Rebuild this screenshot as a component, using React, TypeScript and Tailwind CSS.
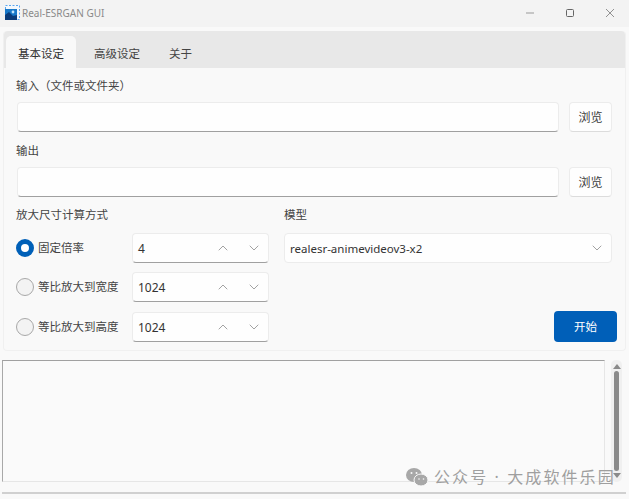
import { ChevronDown, ChevronUp } from "lucide-react";

const FONT = "font-['Noto_Sans','Noto_Sans_CJK_SC',sans-serif]";

function AppIcon() {
  return (
    <svg viewBox="0 0 15 15" width={15} height={15} className="shrink-0">
      <rect x="0" y="0" width="15" height="15" fill="#f3f8fd" />
      <rect x="0.5" y="0.5" width="14" height="14" fill="none" stroke="#5aa5ee" strokeDasharray="2 1.5" />
      <rect x="0" y="4" width="12" height="11" fill="#1878c8" />
      <path d="M0 15V10L4 7l4 4 4-1v5z" fill="#0b3b78" />
      <circle cx="8" cy="7" r="1.4" fill="#bfe3fb" />
    </svg>
  );
}

function TextInput() {
  return <div className="h-[30px] flex-1 rounded-[4px] border border-[#ececec] border-b-[#a0a0a0] bg-[#fefefe]" />;
}

function Browse() {
  return (
    <button className="h-[30px] w-[43px] shrink-0 rounded-[4px] border border-[#ececec] border-b-[#dcdcdc] bg-[#fefefe] pt-[1px] text-[12px] text-[#3c3c3c]">
      浏览
    </button>
  );
}

function Spin({ value }: { value: string }) {
  return (
    <div className="flex h-[30px] w-[137px] items-center rounded-[4px] border border-[#ececec] border-b-[#a0a0a0] bg-[#fefefe] pl-[5px] text-[12px] text-[#333]">
      <span className="flex-1 pt-[1px]">{value}</span>
      <ChevronUp size={16} strokeWidth={1.1} className="mr-[15px] text-[#808080]" />
      <ChevronDown size={16} strokeWidth={1.1} className="mr-[6px] text-[#808080]" />
    </div>
  );
}

function Radio({ label, checked }: { label: string; checked?: boolean }) {
  return (
    <div className="-ml-[1px] flex w-[116px] items-center gap-[4px] text-[11.5px] text-[#444]">
      {checked ? (
        <span className="h-[18px] w-[18px] shrink-0 rounded-full border-[5px] border-[#0060b8] bg-white" />
      ) : (
        <span className="h-[18px] w-[18px] shrink-0 rounded-full border border-[#a8a8a8] bg-[#f3f3f3]" />
      )}
      <span className="whitespace-nowrap">{label}</span>
    </div>
  );
}

export default function App() {
  return (
    <div className={`${FONT} flex h-[499px] w-[629px] flex-col overflow-hidden bg-[#f9f9f9]`}>
      <div className="flex h-[27px] shrink-0 items-center bg-[#f3f3f3] pb-[2px] pl-[5px] text-[10px] text-[#8a8a8a]">
        <AppIcon />
        <span className="ml-[2px] flex-1 pt-[1px]">Real-ESRGAN GUI</span>
        <svg viewBox="0 0 10 10" width={10} height={10} className="mr-[30px]">
          <path d="M1 5h8" stroke="#999" fill="none" />
        </svg>
        <svg viewBox="0 0 10 10" width={10} height={10} className="mr-[30px]">
          <rect x="1.5" y="1.5" width="7" height="7" rx="1" stroke="#666" fill="none" />
        </svg>
        <svg viewBox="0 0 10 10" width={10} height={10} className="mr-[14px]">
          <path d="M1 1l8 8M9 1l-8 8" stroke="#777" fill="none" strokeWidth="0.8" />
        </svg>
      </div>

      <div className="mx-[3px] mt-[4px] h-[320px] shrink-0 rounded-[4px] border-x border-b border-[#f0f0f0] bg-[#f9f9f9]">
        <div className="flex h-[37px] items-end rounded-t-[4px] bg-[#e8e8e8] pl-[2px] text-[11.5px] text-[#444]">
          <div className="flex h-[32px] w-[70px] items-center justify-center rounded-t-[5px] bg-[#f9f9f9] pt-[3px] text-[#333]">基本设定</div>
          <div className="flex h-[32px] w-[82px] items-center justify-center pt-[3px]">高级设定</div>
          <div className="flex h-[32px] w-[45px] items-center justify-center pt-[3px]">关于</div>
        </div>

        <div className="flex flex-col px-[13px] text-[11.5px] text-[#444]">
          <div className="-ml-[1px] mt-[10px] h-[17px] leading-[15px]">输入（文件或文件夹）</div>
          <div className="mt-[7px] flex gap-[10px]">
            <TextInput />
            <Browse />
          </div>
          <div className="-ml-[1px] mt-[11px] h-[17px] leading-[15px]">输出</div>
          <div className="mt-[7px] flex gap-[10px]">
            <TextInput />
            <Browse />
          </div>

          <div className="mt-[10px] flex">
            <div className="flex w-[267px] shrink-0 flex-col">
              <div className="-ml-[1px] h-[17px] leading-[15px]">放大尺寸计算方式</div>
              <div className="mt-[9px] flex items-center">
                <Radio label="固定倍率" checked />
                <Spin value="4" />
              </div>
              <div className="mt-[9px] flex items-center">
                <Radio label="等比放大到宽度" />
                <Spin value="1024" />
              </div>
              <div className="mt-[10px] flex items-center">
                <Radio label="等比放大到高度" />
                <Spin value="1024" />
              </div>
            </div>
            <div className="flex flex-1 flex-col">
              <div className="h-[17px] leading-[15px]">模型</div>
              <div className="mt-[9px] flex h-[30px] items-center rounded-[4px] border border-[#ececec] bg-[#fefefe] pl-[5px] text-[11.5px] text-[#333]">
                <span className="flex-1 pt-[1px]">realesr-animevideov3-x2</span>
                <ChevronDown size={16} strokeWidth={1.1} className="mr-[6px] text-[#808080]" />
              </div>
              <div className="-mr-[5px] flex flex-1 items-end justify-end">
                <button className="h-[31px] w-[63px] rounded-[4px] bg-[#005fb8] text-[11.5px] text-white">开始</button>
              </div>
            </div>
          </div>
        </div>
      </div>

      <div className="mt-[9px] flex h-[122px] shrink-0 pl-[2px]">
        <div className="w-[603px] border border-[#e6e6e6] border-t-[#a0a0a0] border-l-[#a8a8a8] bg-[#fafafa]" />
        <div className="ml-[6px] flex w-[11px] flex-col items-center rounded-[5px] bg-[#f0f0f0] py-[4px]">
          <span className="h-0 w-0 border-x-[4px] border-b-[5px] border-x-transparent border-b-[#8a8a8a]" />
          <span className="my-[2px] w-[5px] flex-1 rounded-full bg-[#8a8a8a]" />
          <span className="h-0 w-0 border-x-[4px] border-t-[5px] border-x-transparent border-t-[#8a8a8a]" />
        </div>
      </div>

      <div className="mt-[10px] mx-[2px] h-[2px] w-[624px] shrink-0 bg-[#d0d0d0]" />

      <div className="absolute top-[465px] left-[405px] flex items-center gap-[5px] text-[16px] tracking-[2.1px] text-[#9f9f9f]">
        <svg viewBox="0 0 24 20" width={24} height={20} className="shrink-0">
          <ellipse cx="9" cy="8" rx="8" ry="7" fill="#a8a8a8" />
          <ellipse cx="16" cy="13" rx="7" ry="6" fill="#a8a8a8" stroke="#f9f9f9" />
          <circle cx="6.5" cy="6" r="1" fill="#f9f9f9" />
          <circle cx="11.5" cy="6" r="1" fill="#f9f9f9" />
          <circle cx="14" cy="12" r="0.8" fill="#f9f9f9" />
          <circle cx="18.5" cy="12" r="0.8" fill="#f9f9f9" />
        </svg>
        <span className="whitespace-nowrap">公众号 · 大成软件乐园</span>
      </div>
    </div>
  );
}
